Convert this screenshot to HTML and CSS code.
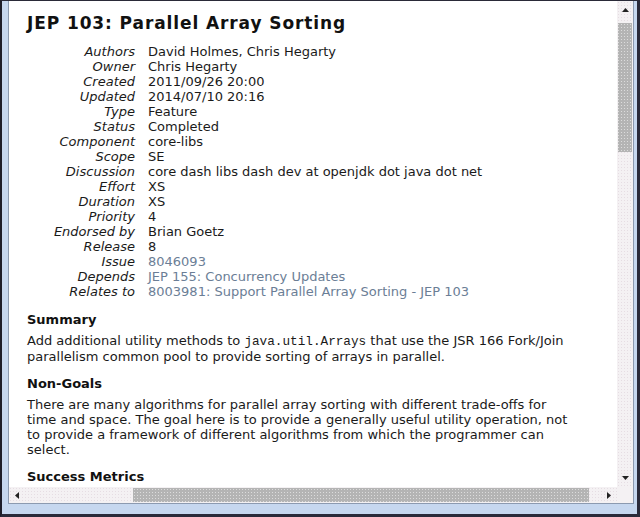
FILE: index.html
```html
<!DOCTYPE html>
<html>
<head>
<meta charset="utf-8">
<link rel="stylesheet" href="styles.css">
</head>
<body>
<div class="window">
  <div class="frame">
    <div class="viewport">
      <div class="page">
        <h1 class="title">JEP 103: Parallel Array Sorting</h1>
        <dl class="meta">
          <dt>Authors</dt><dd>David Holmes, Chris Hegarty</dd>
          <dt>Owner</dt><dd>Chris Hegarty</dd>
          <dt>Created</dt><dd>2011/09/26 20:00</dd>
          <dt>Updated</dt><dd>2014/07/10 20:16</dd>
          <dt>Type</dt><dd>Feature</dd>
          <dt>Status</dt><dd>Completed</dd>
          <dt>Component</dt><dd>core-libs</dd>
          <dt>Scope</dt><dd>SE</dd>
          <dt>Discussion</dt><dd>core dash libs dash dev at openjdk dot java dot net</dd>
          <dt>Effort</dt><dd>XS</dd>
          <dt>Duration</dt><dd>XS</dd>
          <dt>Priority</dt><dd>4</dd>
          <dt>Endorsed by</dt><dd>Brian Goetz</dd>
          <dt>Release</dt><dd>8</dd>
          <dt>Issue</dt><dd><a class="link">8046093</a></dd>
          <dt>Depends</dt><dd><a class="link">JEP 155: Concurrency Updates</a></dd>
          <dt>Relates to</dt><dd><a class="link">8003981: Support Parallel Array Sorting - JEP 103</a></dd>
        </dl>
        <h2 class="heading">Summary</h2>
        <p class="para"><span>Add additional utility methods to </span><code class="code">java.util.Arrays</code><span> that use the JSR 166 Fork/Join parallelism common pool to provide sorting of arrays in parallel.</span></p>
        <h2 class="heading">Non-Goals</h2>
        <p class="para">There are many algorithms for parallel array sorting with different trade-offs for<br>time and space. The goal here is to provide a generally useful utility operation, not<br>to provide a framework of different algorithms from which the programmer can<br>select.</p>
        <h2 class="heading">Success Metrics</h2>
      </div>
    </div>
    <div class="vscroll">
      <div class="btn"><svg width="7" height="4" viewBox="0 0 7 4"><path d="M3.5 0 L7 4 L0 4 Z" fill="#222"/></svg></div>
      <div class="vtrack"><div class="vthumb"></div></div>
      <div class="btn"><svg width="7" height="4" viewBox="0 0 7 4"><path d="M0 0 L7 0 L3.5 4 Z" fill="#222"/></svg></div>
    </div>
    <div class="hscroll">
      <div class="btn"><svg width="4" height="7" viewBox="0 0 4 7"><path d="M4 0 L4 7 L0 3.5 Z" fill="#222"/></svg></div>
      <div class="htrack"><div class="hthumb"></div></div>
      <div class="btn"><svg width="4" height="7" viewBox="0 0 4 7"><path d="M0 0 L4 3.5 L0 7 Z" fill="#222"/></svg></div>
    </div>
    <div class="corner"></div>
  </div>
</div>
</body>
</html>
```
FILE: styles.css
```css
html, body {
  margin: 0;
  padding: 0;
  background: #1e1e2a;
}
.window {
  width: 640px;
  height: 517px;
  box-sizing: border-box;
  border-top: 1px solid #2a2a38;
  border-left: 2px solid #1e1e2a;
  border-right: 3px solid #2a2a3a;
  border-bottom: 3px solid #2a2a3a;
  background: #c6d7ef;
  padding: 0 3px 10px 6px;
  display: flex;
}
.frame {
  flex: 1;
  display: grid;
  grid-template-columns: 1fr 16px;
  grid-template-rows: 1fr 16px;
  border-left: 1px solid #8c9ab0;
  border-bottom: 1px solid #8c9ab0;
  border-right: 1px solid #8c9ab0;
  min-height: 0;
}
.viewport {
  background: #fff;
  overflow: hidden;
  min-height: 0;
}
.page {
  padding: 12px 26px 0 18px;
  font-family: "DejaVu Sans", Verdana, sans-serif;
  font-size: 13px;
  line-height: 15px;
  color: #1a1a1a;
}
.title {
  margin: 0 0 11px;
  font-size: 17px;
  line-height: 20px;
  letter-spacing: 0.9px;
  font-weight: bold;
  color: #111;
}
.meta {
  display: grid;
  grid-template-columns: 108px 1fr;
  column-gap: 13px;
  margin: 0;
  padding-bottom: 1px;
}
.meta dt {
  font-style: italic;
  text-align: right;
  white-space: nowrap;
}
.meta dd {
  margin: 0;
  white-space: nowrap;
}
.link {
  color: #6b7e96;
  text-decoration: none;
}
.heading {
  margin: 11px 0 5px;
  font-size: 13px;
  line-height: 17px;
  font-weight: bold;
  color: #111;
}
.para {
  margin: 0;
}
.code {
  font-family: "Liberation Mono", "Courier New", monospace;
  font-size: 12.7px;
  line-height: 1;
}
.vscroll {
  grid-column: 2;
  grid-row: 1;
  display: flex;
  flex-direction: column;
  background-color: #f4f1f3;
  background-image: radial-gradient(#e6dde3 0.6px, transparent 0.8px);
  background-size: 3px 3px;
}
.hscroll {
  grid-column: 1;
  grid-row: 2;
  display: flex;
  background-color: #f4f1f3;
  background-image: radial-gradient(#e6dde3 0.6px, transparent 0.8px);
  background-size: 3px 3px;
}
.btn {
  flex: 0 0 16px;
  height: 16px;
  width: 16px;
  display: flex;
  align-items: center;
  justify-content: center;
}
.vscroll .btn {
  height: 18px;
  flex-basis: 18px;
}
.vtrack {
  flex: 1;
  padding: 4px 1px 0 1px;
}
.vthumb {
  height: 129px;
  background-color: #b4b4b4;
  background-image: radial-gradient(#dcdcdc 0.6px, transparent 0.9px);
  background-size: 3px 3px;
  background-position: 5px 0;
}
.htrack {
  flex: 1;
  padding: 1px 12px 1px 108px;
}
.hthumb {
  height: 14px;
  background-color: #b4b4b4;
  background-image: radial-gradient(#dcdcdc 0.6px, transparent 0.9px);
  background-size: 3px 3px;
}
.corner {
  grid-column: 2;
  grid-row: 2;
  background: #f4f1f3;
}
```
